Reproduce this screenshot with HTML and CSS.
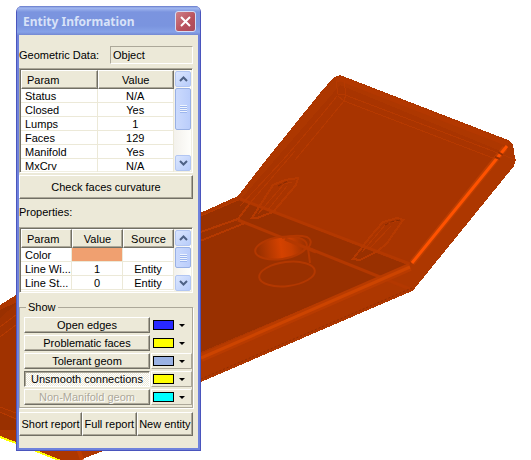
FILE: index.html
```
<!DOCTYPE html>
<html lang="en">

<head>
    <meta charset="UTF-8" />
    <meta name="viewport" content="width=device-width, initial-scale=1.0" />
    <title>Entity Information</title>
    <link rel="stylesheet" href="styles.css">
</head>

<body>
    <main class="viewport">
        <svg class="model" viewBox="0 0 531 460" aria-hidden="true">
            <defs>
                <linearGradient id="hole" x1="0" y1="0" x2="1" y2="0">
                    <stop offset="0.05" stop-color="#993000" />
                    <stop offset="0.5" stop-color="#d44200" />
                    <stop offset="0.7" stop-color="#c63e00" />
                    <stop offset="1" stop-color="#993000" />
                </linearGradient>
            </defs>
            <!-- body -->
            <g shape-rendering="crispEdges">
                <path fill="#ad3700" d="M0 305 L16 295 L200 213 L238 196 L266 160 L320 93 L334 77 L340 75 L508 140 L513 144 L515 158 L516 160 L514 166 L415 288 L412 291 L201 382 L103 451 L80 460 L61 460 L0 436Z" />
                <path fill="#993000" d="M0 310 L201 216 L240 200 L408 265 L201 352 L60 430 L0 430Z" />
                <path fill="#a03200" d="M0 318 L16 304 L16 420 L0 412Z" />
                <path fill="#a83400" d="M240 200 L340 85 L503 152 L410 265Z" />
                <path fill="none" stroke="#ffff00" stroke-width="2" d="M0 437 L16 443 L61 461" />
            </g>
            <g fill="none" stroke="#b33800" stroke-width="3">
                <path stroke-width="5" d="M336 80 L341 79 L508 144" />
                <path d="M240 199 L410 264" />
                <path d="M238 220 L410 289" />
            </g>
            <g fill="none" stroke="#b53900" stroke-width="1" shape-rendering="crispEdges">
                <path stroke-width="2" d="M195 234 L238 219 L250 203" />
                <path stroke-width="2" d="M195 243 L245 223" />
                <path d="M201 216 L238 200 M250 203 L295 151 M240 206 L283 160 L320 117 L337 96" />
                <path d="M295 160 L320 130 L344 101 M336 81 L338 94 L345 95 L498 153 M344 101 L493 158" />
                <path d="M344 81 L346 94 L344 101 L338 96 M498 153 L516 160" />
                <path d="M0 327 L16 315 M0 337 L16 325 M0 407 L16 413 M0 412 L16 419" />
                <path stroke-width="2" d="M252 218 L273 185 L285 180 L298 178 L296 185 L273 212 L257 218Z" />
                <path d="M258 214 L284 184 L292 182 M267 211 L287 186" />
                <path stroke-width="2" d="M353 259 L370 237 L383 222 L397 218 L403 220 L387 243 L378 251 L360 260Z" />
                <path d="M362 252 L386 224 L398 221 M370 248 L391 226" />
            </g>
            <path fill="none" stroke="#852900" stroke-dasharray="4 2" d="M278 186 L288 181 M385 225 L391 222 L400 220" />
            <path fill="none" stroke="#912d00" stroke-dasharray="2 2" d="M201 379 L412 288" />
            <!-- cup -->
            <ellipse cx="281" cy="248" rx="26" ry="11" transform="rotate(-8 281 248)" fill="url(#hole)" stroke="#b33800" stroke-width="2" />
            <path fill="none" stroke="#b33800" stroke-width="2" d="M282 238 Q296 234 307 237 Q314 241 308 248 L310 263" />
            <path fill="none" stroke="#b33800" stroke-width="3" d="M285 239 L316 252" />
            <ellipse cx="287" cy="274" rx="28" ry="12" transform="rotate(-7 287 274)" fill="none" stroke="#b33800" stroke-width="2" />
            <!-- rim highlights -->
            <g fill="none">
                <path stroke="#b83b00" stroke-width="8" d="M201 358 L410 267" />
                <path stroke="#cc4400" stroke-width="3" d="M201 358 L410 267" />
                <path stroke="#bd3e00" stroke-width="6" d="M505 148 L412 263" />
                <path stroke="#ff5200" stroke-width="3" d="M507 146 L412 263" />
                <path stroke="#992f00" d="M498 152 L503 155 M495 157 L500 159" stroke-width="2" />
                <path stroke="#bd3d00" stroke-width="4" d="M78 448 L82 460" />
            </g>
        </svg>

        <form class="window" aria-labelledby="title">
            <header class="titlebar">
                <h1 id="title">Entity Information</h1>
                <button type="button" class="close" aria-label="Close">
                    <svg width="11" height="11" viewBox="0 0 11 11"><path d="M1 1 L10 10 M10 1 L1 10" stroke="#fff" stroke-width="2" /></svg>
                </button>
            </header>

            <div class="content">
                <div class="geometric">
                    <label for="geometric">Geometric Data:</label>
                    <input id="geometric" class="readonly" type="text" value="Object" readonly>
                </div>

                <div class="list list-params">
                    <table>
                        <thead>
                            <tr><th>Param</th><th>Value</th></tr>
                        </thead>
                        <tbody>
                            <tr><td>Status</td><td>N/A</td></tr>
                            <tr><td>Closed</td><td>Yes</td></tr>
                            <tr><td>Lumps</td><td>1</td></tr>
                            <tr><td>Faces</td><td>129</td></tr>
                            <tr><td>Manifold</td><td>Yes</td></tr>
                            <tr><td>MxCrv</td><td>N/A</td></tr>
                        </tbody>
                    </table>
                    <div class="scrollbar">
                        <button type="button" class="scroll-btn" aria-label="Scroll up"><svg width="9" height="6" viewBox="0 0 9 6"><path d="M1 5 L4.5 1.5 L8 5" /></svg></button>
                        <div class="thumb thumb-long"></div>
                        <button type="button" class="scroll-btn scroll-down" aria-label="Scroll down"><svg width="9" height="6" viewBox="0 0 9 6"><path d="M1 1 L4.5 4.5 L8 1" /></svg></button>
                    </div>
                </div>

                <button type="button" class="btn check">Check faces curvature</button>

                <h2 class="caption">Properties:</h2>

                <div class="list list-props">
                    <table>
                        <thead>
                            <tr><th>Param</th><th>Value</th><th>Source</th></tr>
                        </thead>
                        <tbody>
                            <tr><td>Color</td><td class="entity-color"></td><td></td></tr>
                            <tr><td>Line Wi...</td><td>1</td><td>Entity</td></tr>
                            <tr><td>Line St...</td><td>0</td><td>Entity</td></tr>
                        </tbody>
                    </table>
                    <div class="scrollbar">
                        <button type="button" class="scroll-btn" aria-label="Scroll up"><svg width="9" height="6" viewBox="0 0 9 6"><path d="M1 5 L4.5 1.5 L8 5" /></svg></button>
                        <div class="thumb"></div>
                        <button type="button" class="scroll-btn scroll-down" aria-label="Scroll down"><svg width="9" height="6" viewBox="0 0 9 6"><path d="M1 1 L4.5 4.5 L8 1" /></svg></button>
                    </div>
                </div>

                <fieldset class="show">
                    <legend>Show</legend>
                    <div class="show-row">
                        <button type="button" class="btn">Open edges</button>
                        <button type="button" class="picker" aria-label="Open edges color"><span class="swatch blue"></span><span class="arrow"></span></button>
                    </div>
                    <div class="show-row">
                        <button type="button" class="btn">Problematic faces</button>
                        <button type="button" class="picker" aria-label="Problematic faces color"><span class="swatch yellow"></span><span class="arrow"></span></button>
                    </div>
                    <div class="show-row">
                        <button type="button" class="btn">Tolerant geom</button>
                        <button type="button" class="picker raised" aria-label="Tolerant geom color"><span class="swatch steel"></span><span class="arrow"></span></button>
                    </div>
                    <div class="show-row">
                        <button type="button" class="btn pressed" aria-pressed="true">Unsmooth connections</button>
                        <button type="button" class="picker raised" aria-label="Unsmooth connections color"><span class="swatch yellow"></span><span class="arrow"></span></button>
                    </div>
                    <div class="show-row">
                        <button type="button" class="btn" disabled>Non-Manifold geom</button>
                        <button type="button" class="picker raised" aria-label="Non-Manifold geom color"><span class="swatch cyan"></span><span class="arrow"></span></button>
                    </div>
                </fieldset>

                <div class="actions">
                    <button type="button" class="btn">Short report</button>
                    <button type="button" class="btn">Full report</button>
                    <button type="button" class="btn">New entity</button>
                </div>
            </div>
        </form>
    </main>
</body>

</html>
```
FILE: styles.css
```
* {
    box-sizing: border-box;
}

body {
    margin: 0;
    background: #fff;
    color: #000;
    font-family: "Liberation Sans", Arial, sans-serif;
    font-size: 11px;
    line-height: 14px;
}

button,
input {
    font: inherit;
    color: inherit;
    margin: 0;
    padding: 0;
    border-radius: 0;
}

.viewport {
    position: relative;
    overflow: hidden;
}

.model {
    display: block;
    width: 100%;
    height: auto;
}

/* floating tool window */
.window {
    position: absolute;
    left: 16px;
    top: 6px;
    width: 185px;
    background: #ece9d8;
    border: 1px solid #4a55bd;
    border-top: 0;
    border-radius: 6px 6px 0 0;
    box-shadow: inset 0 0 0 2px #6f82dc;
}

.titlebar {
    display: flex;
    align-items: center;
    justify-content: space-between;
    height: 29px;
    padding: 2px 4px 0 6px;
    border-radius: 5px 5px 0 0;
    background: linear-gradient(#6377c9 0, #a3b9f0 2px, #7b94df 6px, #7a94df 20px, #86a2e8 26px, #7388d2 29px);
}

.titlebar h1 {
    margin: 0;
    font-family: "Noto Sans", sans-serif;
    font-size: 12px;
    line-height: 18px;
    color: #d8e2f8;
    white-space: nowrap;
}

.close {
    display: flex;
    align-items: center;
    justify-content: center;
    width: 21px;
    height: 21px;
    border: 1px solid #d5ddf5;
    border-radius: 3px;
    background: linear-gradient(135deg, #cf8089, #b8505c 60%, #a94a5e);
}

.content {
    padding: 11px 7px 14px 2px;
}

.geometric {
    display: flex;
    align-items: center;
    justify-content: space-between;
    height: 18px;
}

.readonly {
    width: 83px;
    height: 18px;
    padding: 0 2px;
    border: 1px solid;
    border-color: #aca899 #fff #fff #aca899;
    background: #ece9d8;
    outline: 0;
}

/* list views */
.list {
    display: flex;
    background: #fff;
    border: 1px solid;
    border-color: #aca899 #fff #fff #aca899;
    box-shadow: inset 1px 1px #716f64, inset -1px -1px #f1efe2;
    padding: 1px;
    overflow: hidden;
}

.list-params {
    height: 105px;
    margin-top: 4px;
}

.list-props {
    height: 66px;
    margin-top: 8px;
}

table {
    flex: 1;
    width: 100%;
    table-layout: fixed;
    border-collapse: separate;
    border-spacing: 0;
    height: max-content;
}

th {
    height: 19px;
    padding: 0;
    font-weight: normal;
    line-height: 14px;
    background: #ece9d8;
    border: 1px solid;
    border-color: #fff #716f64 #716f64 #fff;
    box-shadow: inset -1px -1px #aca899;
}

th:first-child {
    text-align: left;
    padding-left: 5px;
}

td {
    height: 14px;
    padding: 1px 0 0;
    line-height: 12px;
    text-align: center;
    white-space: nowrap;
    border-right: 1px solid #ece9d8;
    border-bottom: 1px solid #ece9d8;
}

td:first-child {
    text-align: left;
    padding-left: 4px;
}

.entity-color {
    background: #f0a070;
}

.scrollbar {
    display: flex;
    flex-direction: column;
    flex: none;
    width: 17px;
    padding: 1px 0 0 1px;
    background: linear-gradient(90deg, #f3f1ec, #fefefb);
}

.scroll-btn {
    display: flex;
    align-items: center;
    justify-content: center;
    flex: none;
    height: 16px;
    border: 1px solid #b2c6f2;
    border-radius: 2px;
    background: linear-gradient(135deg, #dbe6fe, #b7ccfa);
}

.scroll-btn path {
    fill: none;
    stroke: #4d6185;
    stroke-width: 2;
}

.scroll-down {
    margin-top: auto;
}

.thumb {
    display: flex;
    align-items: center;
    justify-content: center;
    flex: none;
    height: 21px;
    margin-top: 1px;
    border: 1px solid #98b0e4;
    border-radius: 2px;
    background: linear-gradient(90deg, #cbdafd, #bacdfb);
}

.thumb::before {
    content: "";
    width: 7px;
    height: 8px;
    background: repeating-linear-gradient(#eef4fe 0, #eef4fe 1px, #9db6ee 1px, #9db6ee 2px);
}

.thumb-long {
    height: 42px;
}

/* buttons */
.btn {
    background: #ece9d8;
    border: 1px solid;
    border-color: #fff #716f64 #716f64 #fff;
    box-shadow: inset -1px -1px #aca899;
    white-space: nowrap;
}

.btn:disabled {
    color: #aca899;
    text-shadow: 1px 1px #fff;
}

.pressed {
    border-color: #716f64 #fff #fff #716f64;
    box-shadow: inset 1px 1px #aca899;
    background: repeating-conic-gradient(#fff 0 25%, #ece9d8 0 50%) 0 0 / 2px 2px;
}

.check {
    display: block;
    width: 100%;
    height: 24px;
    margin-top: 2px;
}

.caption {
    margin: 6px 0 0;
    font-size: 11px;
    font-weight: normal;
    line-height: 14px;
}

.show {
    display: flex;
    flex-direction: column;
    gap: 2px;
    margin: 7px 0 0;
    padding: 3px 0 2px 4px;
    border: 1px solid #aca899;
    box-shadow: 1px 1px #fff;
}

.show legend {
    margin-left: 2px;
    padding: 0 2px;
    line-height: 14px;
}

.show-row {
    display: flex;
    gap: 1px;
}

.show-row .btn {
    flex: 1;
    height: 16px;
    line-height: 14px;
}

.picker {
    display: flex;
    align-items: center;
    gap: 5px;
    width: 41px;
    height: 16px;
    padding-left: 1px;
    border: 1px solid transparent;
    background: #ece9d8;
}

.raised {
    border-color: #fff #aca899 #aca899 #fff;
}

.swatch {
    width: 21px;
    height: 10px;
    border: 1px solid #000;
}

.blue {
    background: #2828ff;
}

.yellow {
    background: #ffff00;
}

.steel {
    background: #9ab2e4;
}

.cyan {
    background: #00ffff;
}

.arrow {
    border: 3px solid transparent;
    border-top-color: #000;
    border-bottom: 0;
}

.actions {
    display: flex;
    margin-top: 4px;
}

.actions .btn {
    flex: 1 1 auto;
    height: 24px;
}
```
